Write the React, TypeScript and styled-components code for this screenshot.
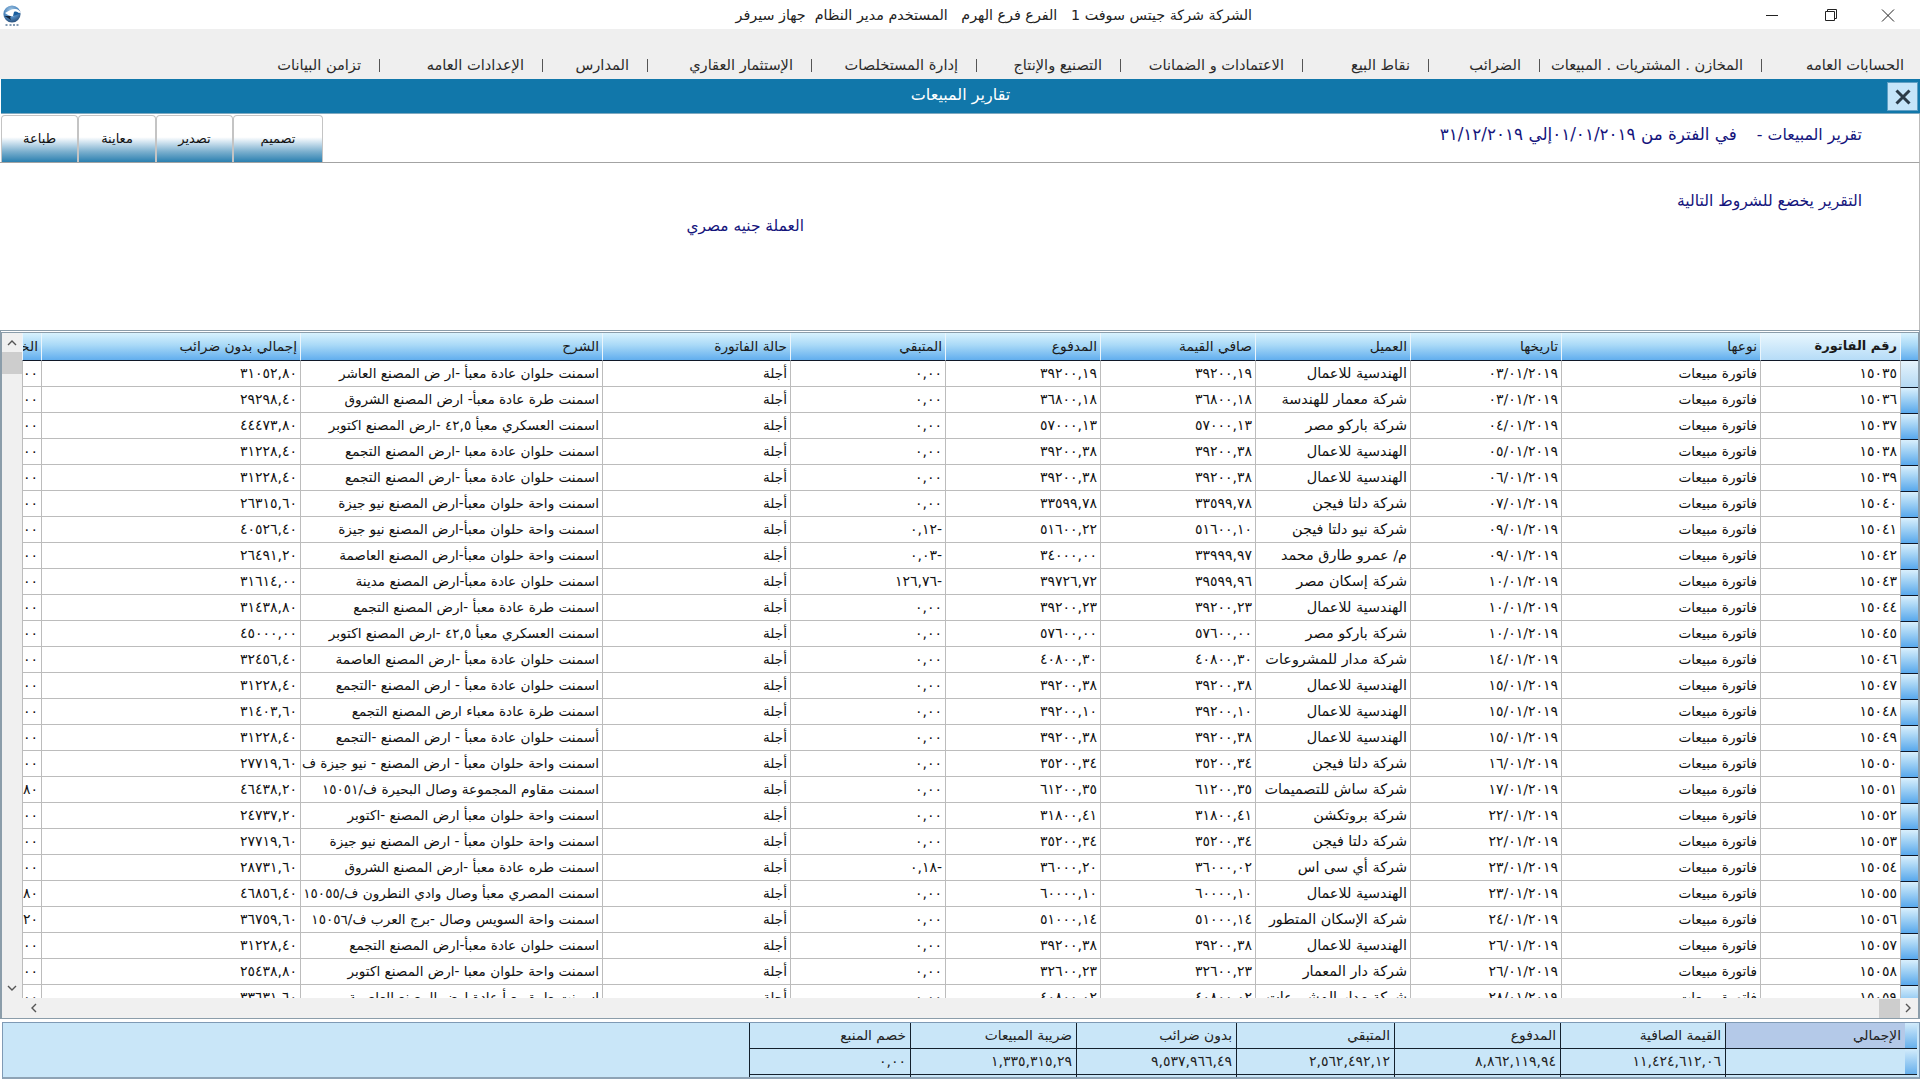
import React from 'react';
import styled, { createGlobalStyle } from 'styled-components';

const Global = createGlobalStyle`
  html, body { margin: 0; padding: 0; background: #fff; }
  body { font-family: "DejaVu Sans", "Liberation Sans", sans-serif; color: #111; }
  * { box-sizing: border-box; }
`;

const Page = styled.div`
  width: 1920px;
  height: 1080px;
  overflow: hidden;
  display: flex;
  flex-direction: column;
  background: #fff;
`;

const TitleBar = styled.div`
  height: 29px;
  flex: none;
  display: flex;
  align-items: center;
  padding-left: 2px;
  background: #fff;
`;
const Company = styled.div`
  direction: rtl;
  width: 530px;
  margin-left: 700px;
  white-space: pre;
  font-size: 14.3px;
  color: #222;
  text-align: right;
`;
const WinButtons = styled.div`
  display: flex;
  margin-left: auto;
  padding-right: 20px;
  gap: 34px;
  align-items: center;
`;
const WinIcon = styled.svg`
  width: 24px;
  height: 14px;
  stroke: #222;
  fill: none;
  stroke-width: 1;
  flex: none;
`;

const MenuBar = styled.nav`
  height: 50px;
  flex: none;
  direction: rtl;
  background: #efefef;
  display: flex;
  align-items: flex-end;
  padding: 0 16px 3px 0;
`;
const MenuItem = styled.div<{ $w: number; $pad?: number }>`
  width: ${p => p.$w}px;
  flex: none;
  display: flex;
  align-items: center;
  justify-content: space-between;
  padding-right: ${p => p.$pad ?? 18}px;
  font-size: 14.6px;
  line-height: 22px;
  color: #2a2a2a;
  white-space: nowrap;
`;
const MenuSep = styled.span`
  width: 1px;
  height: 13px;
  background: #555;
  flex: none;
`;

const Band = styled.header`
  height: 35px;
  flex: none;
  background: #1177aa;
  border-bottom: 1px solid #7fa9c0;
  margin-left: 1px;
  position: relative;
  display: flex;
  align-items: center;
  justify-content: center;
  direction: rtl;
  color: #fff;
  font-size: 16px;
  padding-bottom: 3px;
`;
const CloseBox = styled.button`
  position: absolute;
  right: 2px;
  top: 3px;
  width: 31px;
  height: 29px;
  padding: 0;
  border: 1px solid #5f9fc4;
  background: #c5e4f9;
  display: flex;
  align-items: center;
  justify-content: center;
`;

const Toolbar = styled.section`
  height: 49px;
  flex: none;
  display: flex;
  justify-content: space-between;
  align-items: stretch;
  border-bottom: 1px solid #a3a3a3;
  border-right: 1px solid #bbb;
  padding: 1px 0 0 1px;
`;
const ToolButtons = styled.div`
  display: flex;
`;
const ToolButton = styled.button<{ $w: number }>`
  width: ${p => p.$w}px;
  padding: 0 0 2px;
  direction: rtl;
  font-family: inherit;
  font-size: 13px;
  color: #111;
  border: 1px solid #c4c4c4;
  border-bottom: 0;
  border-radius: 4px 4px 0 0;
  background: linear-gradient(to bottom, #fff 0%, #fff 46%, #d5e6f1 56%, #79aecd 78%, #2b80b0 100%);
`;
const ReportTitle = styled.div`
  direction: rtl;
  color: #14147c;
  font-size: 15.8px;
  padding: 8px 57px 0 0;
  white-space: pre;
  line-height: 22px;
`;
const ReportRange = styled.span`
  font-size: 16.8px;
  letter-spacing: 0.3px;
`;

const Conditions = styled.section`
  height: 167px;
  flex: none;
  direction: rtl;
  color: #14147c;
  font-size: 15.6px;
  padding: 28px 57px 0 0;
  border-right: 1px solid #bbb;
  line-height: 20px;
`;
const Currency = styled.div`
  margin: 5px 1058px 0 0;
  font-size: 15.4px;
`;

const Frame = styled.section`
  height: 689px;
  flex: none;
  border: 1px solid #8b9daa;
  border-top-width: 3px;
  border-left-width: 2px;
  border-right-width: 2px;
  border-top-style: double;
  display: flex;
  flex-direction: column;
  background: #fff;
`;
const GridRow = styled.div`
  height: 665px;
  flex: none;
  display: flex;
`;
const VBar = styled.div`
  width: 20px;
  flex: none;
  background: #f0f0f0;
  display: flex;
  flex-direction: column;
  align-items: center;
  padding: 4px 0 2px;
`;
const VThumb = styled.div`
  width: 20px;
  height: 22px;
  margin-top: 3px;
  background: #cdcdcd;
`;
const Arrow = styled.svg`
  width: 12px;
  height: 12px;
  fill: none;
  stroke: #555;
  stroke-width: 1.4;
  flex: none;
`;
const VArrowDown = styled(Arrow)`
  margin-top: auto;
  margin-bottom: 2px;
`;
const Viewport = styled.div`
  flex: 1;
  min-width: 0;
  overflow: hidden;
`;
const Table = styled.table`
  direction: rtl;
  table-layout: fixed;
  width: 1896px;
  border-collapse: separate;
  border-spacing: 0;
  font-size: 13.6px;
  color: #111;
`;
const Th = styled.th<{ $first?: boolean }>`
  height: 28px;
  padding: 0 3px 2px;
  text-align: right;
  font-weight: ${p => (p.$first ? 700 : 400)};
  font-size: ${p => (p.$first ? 13 : 13.8)}px;
  color: #1a1a1a;
  white-space: nowrap;
  overflow: hidden;
  border-left: 1px solid #eaf5fc;
  border-bottom: 1px solid #101828;
  background: ${p =>
    p.$first
      ? 'linear-gradient(to bottom, #e9f7fe 0%, #b6dcf7 100%)'
      : 'linear-gradient(to bottom, #d8f2fd 0%, #a9d9f7 45%, #62aeee 100%)'};
`;
const Td = styled.td`
  height: 26px;
  padding: 0 3px 2px 3px;
  text-align: right;
  white-space: nowrap;
  overflow: hidden;
  border-left: 1px solid #bcbcbc;
  border-bottom: 1px solid #bcbcbc;
`;
const NumTd = styled(Td)`
  font-size: 14px;
  letter-spacing: 0.5px;
`;
const CustomerTd = styled(Td)`
  font-size: 14.4px;
`;
const RowHead = styled.td<{ $first?: boolean }>`
  height: 26px;
  padding: 0;
  border-left: 1px solid #bcbcbc;
  border-top: ${p => (p.$first ? '0' : '1px solid #101828')};
  background: ${p =>
    p.$first
      ? 'linear-gradient(to bottom, #e6f3fc 0%, #b5d9f3 100%)'
      : 'linear-gradient(to bottom, #d9effc 0%, #a6d4f5 40%, #58a8ec 100%)'};
`;
const HBar = styled.div`
  height: 20px;
  flex: none;
  background: #f0f0f0;
  display: flex;
  align-items: center;
  padding-left: 26px;
`;
const HThumb = styled.div`
  width: 21px;
  height: 19px;
  margin-left: auto;
  margin-right: 2px;
  background: #cdcdcd;
`;
const HArrowRight = styled(Arrow)`
  margin-right: 4px;
`;

const Totals = styled.section`
  height: 57px;
  flex: none;
  margin: 3px 0 0 2px;
  border: 1px solid #7f9ab5;
  border-bottom: 2px solid #8ea3b5;
  padding-right: 2px;
  background: #c9e6f8;
  direction: rtl;
  display: flex;
  overflow: hidden;
`;
const TotalsTable = styled.table`
  table-layout: fixed;
  width: 1168px;
  height: 54px;
  border-collapse: separate;
  border-spacing: 0;
  color: #222;
`;
const TotalHead = styled.td<{ $sel?: boolean }>`
  height: 26px;
  padding: 0 4px 2px;
  text-align: right;
  white-space: nowrap;
  font-size: 13.8px;
  line-height: 16px;
  overflow: hidden;
  border-left: 1px solid #14202c;
  border-bottom: 1px solid #14202c;
  background: ${p => (p.$sel ? '#b4c9e8' : 'transparent')};
`;
const TotalVal = styled(TotalHead)`
  font-size: 14px;
  letter-spacing: 1.5px;
`;
const TotalTail = styled.td`
  padding: 0;
  border-left: 1px solid #14202c;
`;
const TotalRowHead = styled.td`
  padding: 0;
  background: linear-gradient(to bottom, #d2ebfb 0%, #67b0ec 100%);
  border-bottom: 1px solid #14202c;
`;
const TotalBlank = styled.td`
  padding: 0;
`;

const digits = '٠١٢٣٤٥٦٧٨٩';
const ar = (s: string) =>
  s.replace(/\d/g, d => digits[Number(d)]).replace(/\./g, ',');

type Row = [string, string, string, string, string, string, string, string];

const H = 'الهندسية للاعمال';
const rows: Row[] = [
  ['15035', '03', H, '39200.19', '39200.19', '0.00', 'اسمنت حلوان عادة معبأ -ار ض المصنع العاشر', '31052.80'],
  ['15036', '03', 'شركة معمار للهندسة', '36800.18', '36800.18', '0.00', 'اسمنت طرة عادة معبأ- ارض المصنع الشروق', '29298.40'],
  ['15037', '04', 'شركة باركو مصر', '57000.13', '57000.13', '0.00', 'اسمنت العسكري معبأ ٤٢,٥ -ارض المصنع اكتوبر', '44473.80'],
  ['15038', '05', H, '39200.38', '39200.38', '0.00', 'اسمنت حلوان عادة معبا -ارض المصنع التجمع', '31228.40'],
  ['15039', '06', H, '39200.38', '39200.38', '0.00', 'اسمنت حلوان عادة معبأ -ارض المصنع التجمع', '31228.40'],
  ['15040', '07', 'شركة دلتا فيجن', '33599.78', '33599.78', '0.00', 'اسمنت واحة حلوان معبأ-ارض المصنع نيو جيزة', '26315.60'],
  ['15041', '09', 'شركة نيو دلتا فيجن', '51600.10', '51600.22', '-0.12', 'اسمنت واحة حلوان معبأ-ارض المصنع نيو جيزة', '40526.40'],
  ['15042', '09', 'م/ عمرو طارق محمد', '33999.97', '34000.00', '-0.03', 'اسمنت واحة حلوان معبأ-ارض المصنع العاصمة', '26491.20'],
  ['15043', '10', 'شركة إسكان مصر', '39599.96', '39726.72', '-126.76', 'اسمنت حلوان عادة معبأ-ارض المصنع مدينة', '31614.00'],
  ['15044', '10', H, '39200.23', '39200.23', '0.00', 'اسمنت طرة عادة معبأ -ارض المصنع التجمع', '31438.80'],
  ['15045', '10', 'شركة باركو مصر', '57600.00', '57600.00', '0.00', 'اسمنت العسكري معبأ ٤٢,٥ -ارض المصنع اكتوبر', '45000.00'],
  ['15046', '14', 'شركة مدار للمشروعات', '40800.30', '40800.30', '0.00', 'اسمنت حلوان عادة معبأ -ارض المصنع العاصمة', '32456.40'],
  ['15047', '15', H, '39200.38', '39200.38', '0.00', 'اسمنت حلوان عادة معبأ - ارض المصنع -التجمع', '31228.40'],
  ['15048', '15', H, '39200.10', '39200.10', '0.00', 'اسمنت طرة عادة معباء ارض المصنع التجمع', '31403.60'],
  ['15049', '15', H, '39200.38', '39200.38', '0.00', 'أسمنت حلوان عادة معبأ - ارض المصنع -التجمع', '31228.40'],
  ['15050', '16', 'شركة دلتا فيجن', '35200.34', '35200.34', '0.00', 'اسمنت واحة حلوان معبأ - ارض المصنع - نيو جيزة ف', '27719.60'],
  ['15051', '17', 'شركة ساش للتصميمات', '61200.35', '61200.35', '0.00', 'اسمنت مقاوم المجموعة وصال البحيرة ف/١٥٠٥١', '46438.20'],
  ['15052', '22', 'شركة بروتكشن', '31800.41', '31800.41', '0.00', 'اسمنت واحة حلوان  معبأ ارض المصنع -اكتوبر', '24737.20'],
  ['15053', '22', 'شركة دلتا فيجن', '35200.34', '35200.34', '0.00', 'اسمنت واحة حلوان معبأ - ارض المصنع نيو جيزة', '27719.60'],
  ['15054', '23', 'شركة أي سى اس', '36000.02', '36000.20', '-0.18', 'اسمنت طره عادة معبأ -ارض المصنع الشروق', '28731.60'],
  ['15055', '23', H, '60000.10', '60000.10', '0.00', 'اسمنت المصري معبأ وصال وادي النطرون ف/١٥٠٥٥', '46856.40'],
  ['15056', '24', 'شركة الإسكان المتطور', '51000.14', '51000.14', '0.00', 'اسمنت واحة السويس وصال -برج العرب ف/١٥٠٥٦', '36759.60'],
  ['15057', '26', H, '39200.38', '39200.38', '0.00', 'اسمنت حلوان عادة معبأ-ارض المصنع التجمع', '31228.40'],
  ['15058', '26', 'شركة دار المعمار', '32600.23', '32600.23', '0.00', 'اسمنت واحة حلوان معبا -ارض المصنع اكتوبر', '25438.80'],
  ['15059', '28', 'شركة مدار المشروعات', '40800.02', '40800.02', '0.00', 'اسمنت طرة معبأ عادة ارض المصنع العاصمة', '33631.60'],
  ['15060', '29', H, '39200.38', '39200.38', '0.00', 'اسمنت حلوان عادة معبأ-ارض المصنع التجمع', '31228.40'],
];

const clipped: Record<number, string> = { 16: '0.80', 20: '0.80', 21: '0.20' };

const colWidths = [18, 140, 199, 151, 155, 155, 155, 155, 188, 302, 259, 19];
const headers = ['نوعها', 'تاريخها', 'العميل', 'صافي القيمة', 'المدفوع', 'المتبقي', 'حالة الفاتورة', 'الشرح', 'إجمالي بدون ضرائب', 'الخصم'];

const menu: [string, number, number?][] = [
  ['الحسابات العامه', 143, 0],
  ['المخازن . المشتريات . المبيعات', 222],
  ['الضرائب', 111],
  ['نقاط البيع', 126],
  ['الاعتمادات و الضمانات', 182],
  ['التصنيع والإنتاج', 144],
  ['إدارة المستخلصات', 165],
  ['الإستثمار العقاري', 164],
  ['المدارس', 105],
  ['الإعدادات العامه', 163],
  ['تزامن البيانات', 100],
];

const totalCols = [12, 180, 165, 166, 158, 160, 166, 161];
const totalHeads = ['القيمة الصافية', 'المدفوع', 'المتبقي', 'بدون ضرائب', 'ضريبة المبيعات', 'خصم المنبع'];
const totalVals = ['11,424,612.06', '8,862,119.94', '2,562,492.12', '9,537,966.49', '1,335,315.29', '0.00'];

const Logo = () => (
  <svg width="20" height="24" viewBox="0 0 20 24">
    <defs>
      <radialGradient id="lg" cx="0.45" cy="0.3" r="0.75">
        <stop offset="0" stopColor="#a9cbe6" />
        <stop offset="0.55" stopColor="#4f88bf" />
        <stop offset="1" stopColor="#23466f" />
      </radialGradient>
    </defs>
    <circle cx="10" cy="11" r="8.6" fill="url(#lg)" />
    <path d="M2.5 13 C5 14 7 16 9 17 C8 15 8 14 9 13 C6 13 4 13 2.5 13Z" fill="#14243c" />
    <path d="M3 10 C7 8 9 6 13 6 C16 6 18 8 19 10 C15 9 15 12 12 13 C9 14 6 12 3 10Z" fill="#fff" />
    <path d="M12 9 C14 8 16 9 18 11 C15 11 14 13 11 13Z" fill="#1a5f9f" />
    <path d="M3.5 22h2M7.5 22h2M11 22h2M14.5 22h2" stroke="#5a7a9a" strokeWidth="1.4" />
  </svg>
);

export default function App() {
  return (
    <Page>
      <Global />
      <TitleBar>
        <Logo />
        <Company>الشركة شركة جيتس سوفت 1{'   '}الفرع فرع الهرم{'   '}المستخدم مدير النظام{'  '}جهاز سيرفر</Company>
        <WinButtons>
          <WinIcon viewBox="0 0 24 14"><path d="M6 7.5h12" /></WinIcon>
          <WinIcon viewBox="0 0 24 14"><path d="M7.5 3.5h9v9h-9zM9.5 3.5v-2h9v9h-2" /></WinIcon>
          <WinIcon viewBox="0 0 24 14"><path d="M6 1.5l12 12M18 1.5l-12 12" /></WinIcon>
        </WinButtons>
      </TitleBar>

      <MenuBar>
        {menu.map(([label, w, pad], i) => (
          <MenuItem key={label} $w={w} $pad={pad}>
            <span>{label}</span>
            {i < menu.length - 1 && <MenuSep />}
          </MenuItem>
        ))}
      </MenuBar>

      <Band>
        تقارير المبيعات
        <CloseBox aria-label="close">
          <svg width="18" height="18" viewBox="0 0 18 18">
            <path d="M2.5 2.5l13 13M15.5 2.5l-13 13" stroke="#2b3a48" strokeWidth="3" fill="none" />
          </svg>
        </CloseBox>
      </Band>

      <Toolbar>
        <ToolButtons>
          <ToolButton $w={77}>طباعة</ToolButton>
          <ToolButton $w={78}>معاينة</ToolButton>
          <ToolButton $w={77}>تصدير</ToolButton>
          <ToolButton $w={90}>تصميم</ToolButton>
        </ToolButtons>
        <ReportTitle>تقرير المبيعات -{'    '}<ReportRange>في الفترة من ٠١/٠١/٢٠١٩إلي ٣١/١٢/٢٠١٩</ReportRange></ReportTitle>
      </Toolbar>

      <Conditions>
        <div>التقرير يخضع للشروط التالية</div>
        <Currency>العملة جنيه مصري</Currency>
      </Conditions>

      <Frame>
        <GridRow>
          <VBar>
            <Arrow viewBox="0 0 12 12"><path d="M2 8l4-4 4 4" /></Arrow>
            <VThumb />
            <VArrowDown viewBox="0 0 12 12"><path d="M2 4l4 4 4-4" /></VArrowDown>
          </VBar>
          <Viewport>
            <Table>
              <colgroup>
                {colWidths.map((w, i) => <col key={i} style={{ width: w }} />)}
              </colgroup>
              <thead>
                <tr>
                  <Th />
                  <Th $first>رقم الفاتورة</Th>
                  {headers.map(h => <Th key={h}>{h}</Th>)}
                </tr>
              </thead>
              <tbody>
                {rows.map((r, i) => (
                  <tr key={r[0]}>
                    <RowHead $first={i === 0} />
                    <NumTd>{ar(r[0])}</NumTd>
                    <Td>فاتورة مبيعات</Td>
                    <NumTd>{ar(`${r[1]}/01/2019`)}</NumTd>
                    <CustomerTd>{r[2]}</CustomerTd>
                    <NumTd>{ar(r[3])}</NumTd>
                    <NumTd>{ar(r[4])}</NumTd>
                    <NumTd>{ar(r[5])}</NumTd>
                    <Td>أجلة</Td>
                    <Td>{r[6]}</Td>
                    <NumTd>{ar(r[7])}</NumTd>
                    <NumTd>{ar(clipped[i] ?? '0.00')}</NumTd>
                  </tr>
                ))}
              </tbody>
            </Table>
          </Viewport>
        </GridRow>
        <HBar>
          <Arrow viewBox="0 0 12 12"><path d="M8 2L4 6l4 4" /></Arrow>
          <HThumb />
          <HArrowRight viewBox="0 0 12 12"><path d="M4 2l4 4-4 4" /></HArrowRight>
        </HBar>
      </Frame>

      <Totals>
        <TotalsTable>
          <colgroup>
            {totalCols.map((w, i) => <col key={i} style={{ width: w }} />)}
          </colgroup>
          <tbody>
            <tr>
              <TotalRowHead />
              <TotalHead $sel>الإجمالي</TotalHead>
              {totalHeads.map(h => <TotalHead key={h}>{h}</TotalHead>)}
            </tr>
            <tr>
              <TotalRowHead />
              <TotalVal />
              {totalVals.map(v => <TotalVal key={v}>{ar(v)}</TotalVal>)}
            </tr>
            <tr>
              <TotalBlank />
              {totalCols.slice(1).map((_, i) => <TotalTail key={i} />)}
            </tr>
          </tbody>
        </TotalsTable>
      </Totals>
    </Page>
  );
}
